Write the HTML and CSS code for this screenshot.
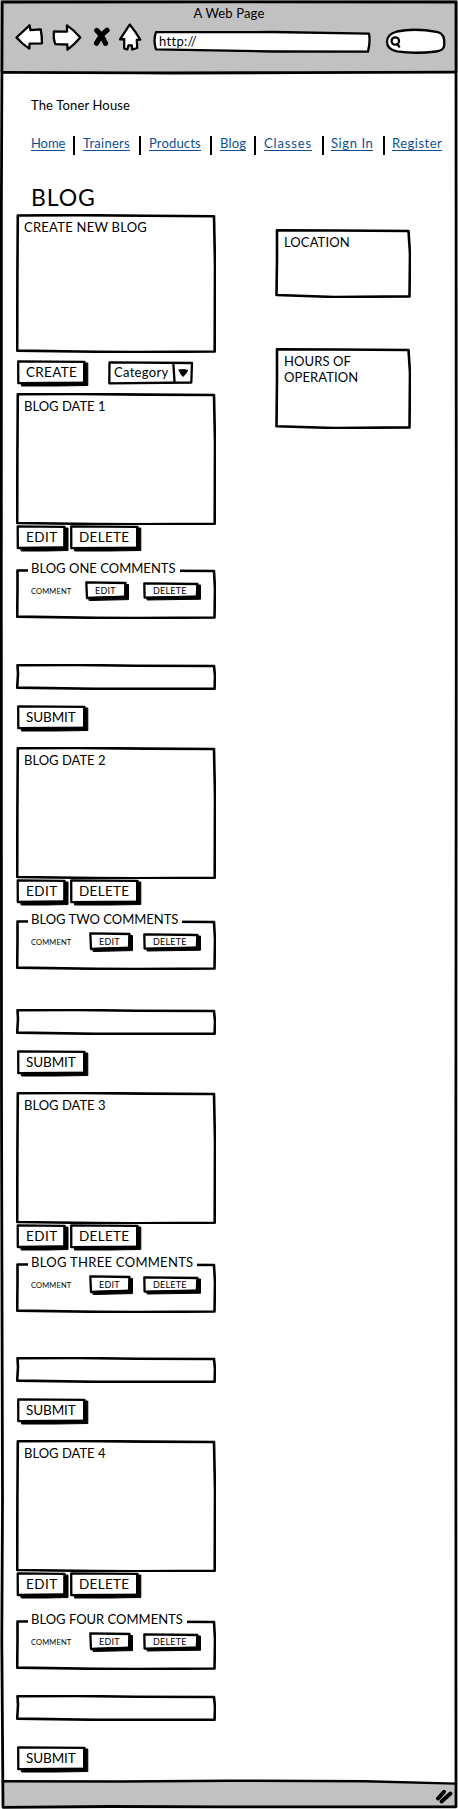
FILE: index.html
```html
<!DOCTYPE html>
<html lang="en">
<head>
<meta charset="utf-8">
<title>A Web Page</title>
<link rel="stylesheet" href="styles.css">
</head>
<body>
<svg class="defs" width="0" height="0" aria-hidden="true">
  <symbol id="panel" viewBox="0 0 200 132">
    <path d="M1.8 1.3 L60 .9 L130 1.6 L198 2 L199 50 L198.7 130.7 L120 131.2 L80 131 L1.2 130 L1.4 60Z"/>
  </symbol>
  <symbol id="panel-tall" viewBox="0 0 200 139">
    <path d="M1.8 1.5 L60 1.1 L130 1.8 L198 2.2 L199 50 L198.7 137.5 L120 138 L80 137.7 L1.2 136.6 L1.4 60Z"/>
  </symbol>
  <symbol id="field" viewBox="0 0 200 26">
    <path d="M1.5 1.2 L60 1 L120 1.7 L198 2 L199 12 L198.6 24.6 L120 24.8 L80 24.8 L1.2 23.6 L2 10Z"/>
  </symbol>
  <symbol id="group" viewBox="0 0 200 50">
    <path d="M1.5 1.5 L60 1.3 L198 2 L199 20 L198.5 48.5 L120 49 L80 48.8 L1.2 47.6 L1.5 20Z"/>
  </symbol>
  <symbol id="side" viewBox="0 0 136 69">
    <path d="M2 1.3 L60 1.5 L133.5 2 L135 25 L134.5 67.4 L60 68 L1.5 66 L2 30Z"/>
  </symbol>
  <symbol id="side-tall" viewBox="0 0 136 81">
    <path d="M2 1.3 L60 1.5 L133.5 2 L135 25 L134.5 79.4 L60 80 L1.5 78.3 L2 30Z"/>
  </symbol>
  <symbol id="btn-l" viewBox="0 0 72 27">
    <path class="fill" d="M5 22.8 L67 22.3 L67 3 L71.3 3 L71.3 25.5 L40 26 L5.5 26Z"/>
    <path d="M1.7 1.4 L68 1.8 L67.6 22.6 L1.8 23.2Z"/>
  </symbol>
  <symbol id="btn-s" viewBox="0 0 53 27">
    <path class="fill" d="M5 22.8 L48 22 L48 3 L52 3 L52 25.5 L30 26 L5.5 26Z"/>
    <path d="M1.7 1.4 L48.6 1.8 L48.4 22.4 L1.8 23Z"/>
  </symbol>
  <symbol id="mini-s" viewBox="0 0 45 21">
    <path class="fill" d="M4 16.5 L40 15 L40 3.5 L43.5 3.5 L43.5 18.6 L4.5 19.5Z"/>
    <path d="M1.3 1.3 L40.5 2 L40 16 L2 17Z"/>
  </symbol>
  <symbol id="mini-l" viewBox="0 0 59 19">
    <path class="fill" d="M4 15.5 L54 14 L54 3 L57.5 3 L57.5 17.2 L4.5 18Z"/>
    <path d="M1.3 1.3 L54.4 2 L53.8 14.6 L1.6 15.6Z"/>
  </symbol>
</svg>

<div class="window">
  <div class="surface">
    <header class="chrome">
      <div class="title">A Web Page</div>
      <div class="toolbar">
        <svg class="nav-icons" width="130" height="32" viewBox="0 0 130 32" aria-hidden="true">
          <path d="M2.5 16.5 L15.5 4.3 L16.5 9.2 L26.7 8.3 Q28 15 28 22.3 L15.6 22.6 L15.3 27.6 Q8 23 2.5 16.5Z"/>
          <path d="M40 10.5 Q46 10.8 53 10.5 L53 4.4 Q60 9 66.3 16.5 Q61 23 53.5 28.7 L53.3 23.5 L41.5 23.2 Q39 18 40 10.5Z"/>
          <path class="cross" d="M82.8 9.5 Q87 13 91.5 22.3 M93 9.3 Q87 14 82.5 22.3"/>
          <path d="M115.7 3.6 L106 18.4 L110.2 18.2 L110.2 27.4 L113.3 28.5 L114.5 24.4 L117.8 24.4 L118.3 28.5 L123.2 27 L122.8 19 L126.2 18.5 Q121 10 115.7 3.6Z"/>
        </svg>
        <div class="address stack">
          <svg width="218" height="24" viewBox="0 0 218 24" aria-hidden="true"><path d="M3 2.2 L120 2 L216 3.7 Q217.5 12 215 21.6 L120 21.5 L3 19.3 Q0 10 3 2.2Z"/></svg>
          <span class="url">http://</span>
        </div>
        <svg class="search" width="62" height="27" viewBox="0 0 62 27" aria-hidden="true">
          <path d="M12 3.5 Q30 -.3 53 4.2 Q60 6 59.3 17 Q59 22.6 51 23.5 Q30 26 12 23.4 Q2 21 2 14 Q2 6 12 3.5Z"/>
          <circle cx="10.3" cy="13" r="3.7"/><path d="M12.4 16.2 L14.2 18.6"/>
        </svg>
      </div>
    </header>

    <main>
      <div class="brand">The Toner House</div>
      <nav>
        <a class="n1">Home</a><a class="n2">Trainers</a><a class="n3">Products</a><a class="n4">Blog</a><a class="n5">Classes</a><a class="n6">Sign In</a><a class="n7">Register</a>
      </nav>
      <h1>BLOG</h1>
      <div class="columns">
        <div class="feed">
          <section class="panel tall stack"><svg><use href="#panel-tall"/></svg><span class="t-new">CREATE NEW BLOG</span></section>
          <div class="create-row">
            <div class="btn large stack"><svg><use href="#btn-l"/></svg><span class="t-create">CREATE</span></div>
            <div class="select stack">
              <svg width="86" height="24" viewBox="0 0 86 24" aria-hidden="true"><path d="M1.5 1.3 L84 2 L83.3 21.5 L1.3 22.3Z M65.3 2 L66.6 21.7"/><path class="fill" d="M71.2 9 Q75 8 79.6 9.3 Q78.5 12.5 75 15.5 Q71.8 12.5 71.2 9Z"/></svg>
              <span>Category</span>
            </div>
          </div>

          <article class="post first">
            <div class="panel stack"><svg><use href="#panel"/></svg><span>BLOG DATE 1</span></div>
            <div class="actions">
              <div class="btn small stack"><svg><use href="#btn-s"/></svg><span class="t-edit">EDIT</span></div>
              <div class="btn large stack"><svg><use href="#btn-l"/></svg><span class="t-delete">DELETE</span></div>
            </div>
            <div class="group stack"><svg><use href="#group"/></svg>
              <div class="group-body">
                <div class="legend l1">BLOG ONE COMMENTS</div>
                <div class="comment"><span class="label">COMMENT</span>
                  <div class="mini edit stack"><svg><use href="#mini-s"/></svg><span>EDIT</span></div>
                  <div class="mini delete stack"><svg><use href="#mini-l"/></svg><span>DELETE</span></div></div>
              </div>
            </div>
            <div class="field"><svg><use href="#field"/></svg></div>
            <div class="btn large submit stack"><svg><use href="#btn-l"/></svg><span>SUBMIT</span></div>
          </article>

          <article class="post second">
            <div class="panel stack"><svg><use href="#panel"/></svg><span>BLOG DATE 2</span></div>
            <div class="actions">
              <div class="btn small stack"><svg><use href="#btn-s"/></svg><span class="t-edit">EDIT</span></div>
              <div class="btn large stack"><svg><use href="#btn-l"/></svg><span class="t-delete">DELETE</span></div>
            </div>
            <div class="group stack"><svg><use href="#group"/></svg>
              <div class="group-body">
                <div class="legend l2">BLOG TWO COMMENTS</div>
                <div class="comment"><span class="label">COMMENT</span>
                  <div class="mini edit stack"><svg><use href="#mini-s"/></svg><span>EDIT</span></div>
                  <div class="mini delete stack"><svg><use href="#mini-l"/></svg><span>DELETE</span></div></div>
              </div>
            </div>
            <div class="field"><svg><use href="#field"/></svg></div>
            <div class="btn large submit stack"><svg><use href="#btn-l"/></svg><span>SUBMIT</span></div>
          </article>

          <article class="post third">
            <div class="panel stack"><svg><use href="#panel"/></svg><span>BLOG DATE 3</span></div>
            <div class="actions">
              <div class="btn small stack"><svg><use href="#btn-s"/></svg><span class="t-edit">EDIT</span></div>
              <div class="btn large stack"><svg><use href="#btn-l"/></svg><span class="t-delete">DELETE</span></div>
            </div>
            <div class="group stack"><svg><use href="#group"/></svg>
              <div class="group-body">
                <div class="legend l3">BLOG THREE COMMENTS</div>
                <div class="comment"><span class="label">COMMENT</span>
                  <div class="mini edit stack"><svg><use href="#mini-s"/></svg><span>EDIT</span></div>
                  <div class="mini delete stack"><svg><use href="#mini-l"/></svg><span>DELETE</span></div></div>
              </div>
            </div>
            <div class="field"><svg><use href="#field"/></svg></div>
            <div class="btn large submit stack"><svg><use href="#btn-l"/></svg><span>SUBMIT</span></div>
          </article>

          <article class="post fourth">
            <div class="panel stack"><svg><use href="#panel"/></svg><span>BLOG DATE 4</span></div>
            <div class="actions">
              <div class="btn small stack"><svg><use href="#btn-s"/></svg><span class="t-edit">EDIT</span></div>
              <div class="btn large stack"><svg><use href="#btn-l"/></svg><span class="t-delete">DELETE</span></div>
            </div>
            <div class="group stack"><svg><use href="#group"/></svg>
              <div class="group-body">
                <div class="legend l4">BLOG FOUR COMMENTS</div>
                <div class="comment"><span class="label">COMMENT</span>
                  <div class="mini edit stack"><svg><use href="#mini-s"/></svg><span>EDIT</span></div>
                  <div class="mini delete stack"><svg><use href="#mini-l"/></svg><span>DELETE</span></div></div>
              </div>
            </div>
            <div class="field"><svg><use href="#field"/></svg></div>
            <div class="btn large submit stack"><svg><use href="#btn-l"/></svg><span>SUBMIT</span></div>
          </article>
        </div>

        <aside>
          <section class="side stack"><svg><use href="#side"/></svg><span>LOCATION</span></section>
          <section class="side hours stack"><svg><use href="#side-tall"/></svg><span>HOURS OF<br>OPERATION</span></section>
        </aside>
      </div>
    </main>
  </div>

  <svg class="frame" width="458" height="1809" viewBox="0 0 458 1809" aria-hidden="true">
    <path class="grey" d="M3 1781 L230 1781 L365 1781 L456 1783.5 L456 1807 L3 1807Z"/>
    <path class="thin" d="M3 1781.3 L120 1781.5 L230 1780.7 L365 1781.2 L456 1783.6"/>
    <path d="M3 72.3 L140 72.8 L170 73 L300 72.6 L456 72.2"/>
    <path d="M2.2 2 L230 1.8 L456 2 L456.3 600 L455.8 1200 L456 1806.8 L228 1806.8 L110 1806.5 L3 1807.3 L1.8 1640 L2.5 1500 L1.5 1100 L1.3 600 L1.4 200Z"/>
    <path class="grip" d="M438 1798.5 L444 1791.8 M441.5 1801.5 L450.5 1793.5"/>
  </svg>
</div>
</body>
</html>
```
FILE: styles.css
```css
* { box-sizing: border-box; }
body {
  display: grid;
  grid-template-columns: 458px;
  margin: 0;
  background: #fff;
  color: #000;
  font: 13px/16px Lato, "Open Sans", sans-serif;
  letter-spacing: .15px;
  white-space: nowrap;
}
svg {
  display: block;
  fill: none;
  stroke: #000;
  stroke-width: 2.3;
  stroke-linejoin: round;
  stroke-linecap: round;
  overflow: visible;
}
svg .fill { fill: #000; stroke-width: 1; }
.defs, .window { grid-area: 1 / 1; }
.window, .stack { display: grid; grid-template: 100% / 100%; }
.window > *, .stack > * { grid-area: 1 / 1; }
.window { width: 458px; height: 1809px; overflow: hidden; }

/* Browser chrome */
.chrome { height: 72px; background: #c1c1c1; padding-top: 5px; }
.title { text-align: center; }
.toolbar { display: flex; padding-left: 14px; }
.toolbar svg { fill: #fff; }
.toolbar .cross { fill: none; stroke-width: 5.2; }
.address { width: 218px; height: 24px; margin: 9px 0 0 9px; }
.url { padding: 3px 0 0 6px; letter-spacing: .3px; }
.search { margin: 7px 0 0 14px; }
.frame .grey { fill: #c1c1c1; stroke: none; }
.frame { stroke-width: 2.8; }
.frame .thin { stroke-width: 2.4; }
.frame .grip { stroke-width: 4; }

/* Page heading */
.brand { margin: 25px 0 0 31px; }
nav {
  display: grid;
  grid-template-columns: 43px 66px 71px 44px 67px 61px 60px;
  height: 19px;
  margin: 23px 0 0 31px;
  background:
    linear-gradient(#000, #000) 42px 0 / 2px 19px no-repeat,
    linear-gradient(#000, #000) 108px 0 / 2px 19px no-repeat,
    linear-gradient(#000, #000) 179px 0 / 2px 19px no-repeat,
    linear-gradient(#000, #000) 223px 0 / 2px 19px no-repeat,
    linear-gradient(#000, #000) 291px 0 / 2px 19px no-repeat,
    linear-gradient(#000, #000) 352px 0 / 2px 19px no-repeat;
}
nav a {
  width: max-content;
  height: 15px;
  border-bottom: 1px solid #104f98;
  color: #104f98;
  line-height: 15px;
}
nav a + a { margin-left: 9px; }
.n1 { letter-spacing: -.1px; }
.n2 { letter-spacing: .25px; }
.n5 { letter-spacing: .85px; }
.n6 { letter-spacing: .6px; }
.n7 { letter-spacing: .5px; }
h1 { height: 31px; margin: 28px 0 0 31px; font-size: 23px; line-height: 28px; font-weight: 400; letter-spacing: .9px; }

/* Boxes */
.columns { display: flex; padding-left: 16px; }
.feed { width: 200px; }
.panel { width: 200px; height: 132px; }
.panel.tall { height: 139px; }
.panel svg, .field svg, .group > svg, .side svg, .btn svg, .mini svg { width: 100%; height: 100%; }
.panel svg, .field svg, .group > svg, .side svg { stroke-width: 2.6; }
.panel span { padding: 5px 0 0 8px; letter-spacing: 0; }
.panel .t-new { letter-spacing: .25px; }
.create-row { display: flex; gap: 19px; height: 33px; margin-top: 7px; }
.btn { height: 27px; line-height: 22px; letter-spacing: .3px; font-size: 13.5px; }
.btn.large { width: 73px; }
.btn.small { width: 53px; }
.btn span { padding: 1px 0 0 10px; }
.btn .t-edit { letter-spacing: .5px; }
.submit span { letter-spacing: -.1px; }
.select { width: 86px; height: 24px; margin-top: 1px; }
.select span { padding: 3px 0 0 6px; letter-spacing: .3px; }

/* Posts */
.actions { display: flex; }
.group { width: 200px; height: 50px; }
.group-body { padding-left: 12px; }
.legend { width: max-content; height: 16px; margin-top: -9px; padding: 0 4px 0 3px; background: #fff; }
.l1 { letter-spacing: .02px; }
.l2, .l4 { letter-spacing: 0; }
.l3 { letter-spacing: .3px; }
.comment { display: flex; padding-left: 3px; line-height: 12px; }
.label { width: 58px; padding-top: 10px; font-size: 7.5px; }
.mini { letter-spacing: .2px; font-size: 9px; }
.mini.edit { width: 45px; height: 21px; margin-top: 5px; }
.mini.delete { width: 59px; height: 19px; margin: 6px 0 0 9px; }
.mini span { padding: 4px 0 0 10px; }
.mini.delete span { padding-top: 3px; }
.field { width: 200px; height: 26px; }
.post { height: 348px; }
.first { height: 354px; }
.second { height: 345px; }
.first .group { margin-top: 17px; }
.second .group { margin-top: 14px; }
.third .group { margin-top: 12px; }
.fourth .group { margin-top: 21px; }
.first .field { margin-top: 45px; }
.second .field { margin-top: 39px; }
.third .field { margin-top: 44px; }
.fourth .field { margin-top: 25px; }
.submit { margin-top: 15px; }
.fourth .submit { margin-top: 25px; }
.first .label { width: 54px; }
.first .mini.delete { margin-left: 13px; }

/* Sidebar */
aside { padding: 15px 0 0 59px; }
.side { width: 136px; height: 69px; }
.side.hours { height: 81px; margin-top: 50px; }
.side span { padding: 5px 0 0 9px; letter-spacing: .1px; }
```
